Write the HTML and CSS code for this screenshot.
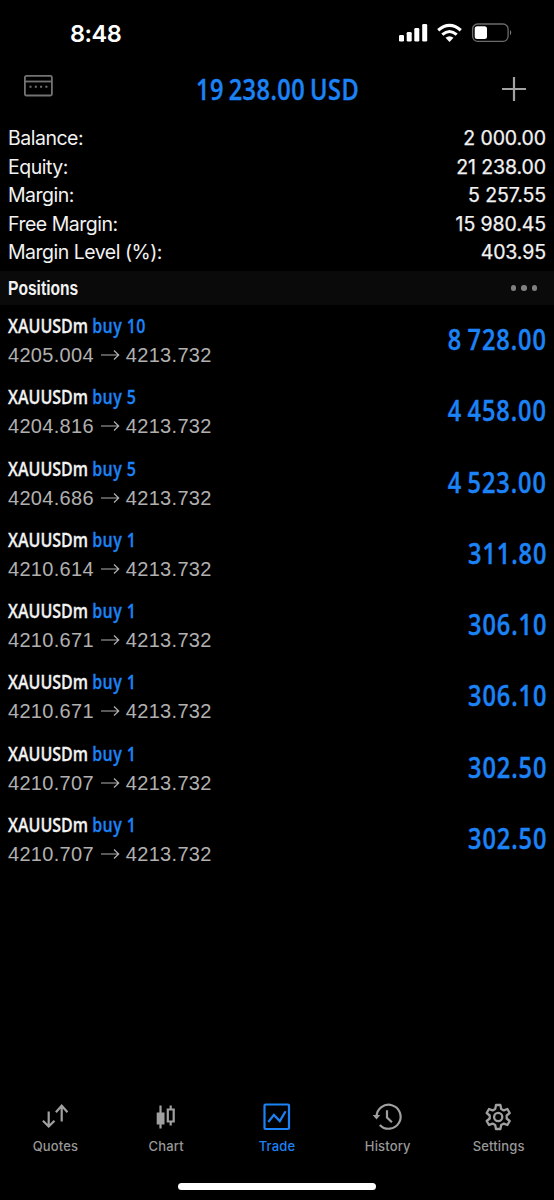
FILE: index.html
```html
<!DOCTYPE html>
<html lang="en">
<head>
<meta charset="utf-8">
<title>Trade</title>
<link rel="stylesheet" href="styles.css">
</head>
<body>
<div class="app">
  <div class="status">
    <span class="time">8:48</span>
    <svg class="status-icons" width="114" height="20" viewBox="0 0 114 20">
      <g fill="#fff">
        <rect x="1" y="12" width="5" height="6.500" rx="1.3"/><rect x="8.700" y="9" width="5" height="9.500" rx="1.3"/><rect x="16.300" y="5" width="5" height="13.500" rx="1.3"/><rect x="24.200" y="1" width="5" height="17.500" rx="1.3"/>
        <path d="M51.500 19 L47.500 14.800 Q51.500 11.800 55.500 14.800 Z"/>
      </g>
      <g fill="none" stroke="#fff" stroke-width="3.100"><path d="M40.200 7.200Q51.500 -2.400 62.800 7.200"/><path d="M44.300 11.600Q51.500 5.400 58.700 11.600"/></g>
      <rect x="74.600" y="1" width="35.500" height="17.300" rx="5" fill="none" stroke="#6b6b6b" stroke-width="1.300"/>
      <rect x="76.700" y="3.300" width="12.300" height="12.800" rx="2.500" fill="#fff"/>
      <path d="M112 6.800Q114.500 9.600 112 12.500Z" fill="#777"/>
    </svg>
  </div>
  <div class="header">
    <svg class="terminal" width="29" height="22" viewBox="0 0 29 22" fill="none" stroke="#737373" stroke-width="1.800"><rect x=".9" y=".9" width="27" height="19.600" rx="1.500"/><path d="M1 6.500H28"/><path d="M5.500 11.700h18" stroke-width="2" stroke-dasharray="2 3.300"/></svg>
    <span class="total">19 238.00 USD</span>
    <svg class="plus" width="24" height="24" viewBox="0 0 24 24" stroke="#a2a2a2" stroke-width="2.200"><path d="M0 12H24M12 0V24"/></svg>
  </div>
  <div class="summary">
    <div class="line"><span>Balance:</span><b>2 000.00</b></div>
    <div class="line"><span>Equity:</span><b>21 238.00</b></div>
    <div class="line"><span>Margin:</span><b>5 257.55</b></div>
    <div class="line"><span>Free Margin:</span><b>15 980.45</b></div>
    <div class="line"><span>Margin Level (%):</span><b>403.95</b></div>
  </div>
  <div class="section"><span class="section-title">Positions</span><span class="dots"><i></i><i></i><i></i></span></div>
  <div class="positions" id="positions"></div>
  <div class="tabs">
    <div class="tab"><svg width="28" height="28" viewBox="0 0 28 28" fill="none" stroke="#a0a0a0" stroke-width="2.200"><path d="M7.700 8.500V23.500M1.900 17.700L7.700 23.500L13.500 17.700M20.700 18.500V3M14.900 9.200L20.700 2.700L26.500 9.200"/></svg><span>Quotes</span></div>
    <div class="tab"><svg width="28" height="28" viewBox="0 0 28 28" fill="none" stroke="#a0a0a0" stroke-width="2.200"><path d="M8.500 2.500V25.500M18.700 2.500V7M18.700 18V22.500"/><path d="M4.700 9.500H12.500V21.500H4.700Z" fill="#a0a0a0" stroke="none"/><path d="M15.800 6.500H21.700V18.500H15.800Z" stroke-width="2.200"/></svg><span>Chart</span></div>
    <div class="tab active"><svg width="28" height="28" viewBox="0 0 28 28" fill="none" stroke="#1c83f6" stroke-width="2.200"><rect x="1.500" y="1.500" width="24.500" height="24.500" rx="1"/><path d="M5.300 19L10.900 11.900L16.800 18.100L22.600 8.200"/></svg><span>Trade</span></div>
    <div class="tab"><svg width="28" height="28" viewBox="0 0 28 28" fill="none" stroke="#a0a0a0" stroke-width="2.200"><path d="M2.600 13.700A12 12 0 1 1 5.800 21.900M13 7.300V14.500L17.900 19.300"/><path d="M-1.300 12H6.300L2.500 16.500Z" fill="#a0a0a0" stroke="none"/></svg><span>History</span></div>
    <div class="tab"><svg width="28" height="28" viewBox="0 0 28 28" fill="none" stroke="#a0a0a0" stroke-width="2.300" stroke-linejoin="round"><path d="M11 2H15.400L16.200 5.900L18.800 7.400L22.400 6L24.700 10L21.700 12.500V15.500L24.700 18L22.400 22L18.800 20.600L16.200 22.100L15.400 26H11L10.200 22.100L7.600 20.600L4 22L1.700 18L4.700 15.500V12.500L1.700 10L4 6L7.600 7.400L10.200 5.900Z"/><circle cx="13.200" cy="14" r="4.100"/></svg><span>Settings</span></div>
  </div>
  <div class="home"></div>
</div>
<script src="positions.js"></script>
</body>
</html>
```
FILE: styles.css
```css
* { box-sizing: border-box; }
body { margin: 0; background: #000; }
.app { width: 554px; height: 1200px; display: flex; flex-direction: column; background: #000; color: #f2f2f2; font-family: Inter, "Liberation Sans", sans-serif; overflow: hidden; white-space: nowrap; }
.status { height: 66px; padding: 0 42px 0 70px; display: flex; align-items: center; justify-content: space-between; }
.time { font-size: 23.500px; font-weight: 600; letter-spacing: -.5px; color: #fff; }
.status-icons { overflow: visible; }
.header { height: 57px; padding: 0 28px 12px 24px; display: grid; grid-template-columns: 1fr 162px 1fr; align-items: center; }
.terminal { margin-bottom: 5px; }
.total { font: 600 28px/40px "Open Sans", sans-serif; letter-spacing: .55px; word-spacing: -2px; margin-left: 2px; color: #1c83f6; -webkit-text-stroke: .4px; transform: scaleX(.84); transform-origin: 0 50%; }
.plus { justify-self: end; }
.summary { height: 148px; padding: 1px 8px 0; }
.line { display: flex; justify-content: space-between; height: 28.500px; line-height: 28.500px; font-size: 19.500px; letter-spacing: -.5px; }
.line b { font-weight: 400; letter-spacing: -.1px; -webkit-text-stroke: .25px; }
.section { height: 34px; padding: 0 17px 0 8px; display: flex; align-items: center; justify-content: space-between; background: #0a0a0a; }
.section-title { font: bold 20px/34px "Liberation Sans", sans-serif; transform: scaleX(.78); transform-origin: 0 50%; }
.dots { display: flex; gap: 5px; }
.dots i { width: 5.500px; height: 5.500px; border-radius: 50%; background: #808080; }
.positions { flex: 1; }
.position { height: 71.300px; padding: 0 8px; display: flex; justify-content: space-between; }
.symbol { font: 600 20px/28px "Open Sans", sans-serif; margin-top: 7px; -webkit-text-stroke: .3px; transform: scaleX(.8); transform-origin: 0 50%; }
.side { color: #1c83f6; letter-spacing: .5px; }
.prices { display: flex; align-items: center; gap: 6px; font: 20px/30px "Liberation Sans", sans-serif; letter-spacing: .3px; color: #b0b0b0; }
.profit { font: 600 28px/40px "Open Sans", sans-serif; letter-spacing: 1.100px; word-spacing: -2px; color: #1c83f6; -webkit-text-stroke: .4px; margin: 14px -1px 0 0; transform: scaleX(.84); transform-origin: 100% 50%; }
.tabs { height: 81px; display: grid; grid-template-columns: repeat(5, 1fr); }
.tab { display: flex; flex-direction: column; align-items: center; color: #989898; font-size: 13px; font-weight: 500; line-height: 18px; letter-spacing: .15px; gap: 6px; padding-top: 1px; }
.tab svg { overflow: visible; }
.active { color: #1c83f6; }
.home { width: 198px; height: 6.500px; margin: 0 auto 10.500px; background: #fff; border-radius: 4px; }
```
FILE: positions.js
```js
const positions = [
  ["10", "4205.004", "8 728.00"],
  ["5", "4204.816", "4 458.00"],
  ["5", "4204.686", "4 523.00"],
  ["1", "4210.614", "311.80"],
  ["1", "4210.671", "306.10"],
  ["1", "4210.671", "306.10"],
  ["1", "4210.707", "302.50"],
  ["1", "4210.707", "302.50"]
];
document.getElementById("positions").innerHTML = positions.map(([volume, open, profit]) => `
  <div class="position">
    <div>
      <div class="symbol">XAUUSDm <span class="side">buy ${volume}</span></div>
      <div class="prices"><span>${open}</span><svg width="20" height="12" viewBox="0 0 20 12" fill="none" stroke="#b0b0b0" stroke-width="1.200"><path d="M1 6H18.500M14 1.500L18.700 6L14 10.500"/></svg><span>4213.732</span></div>
    </div>
    <div class="profit">${profit}</div>
  </div>`).join("");
```
